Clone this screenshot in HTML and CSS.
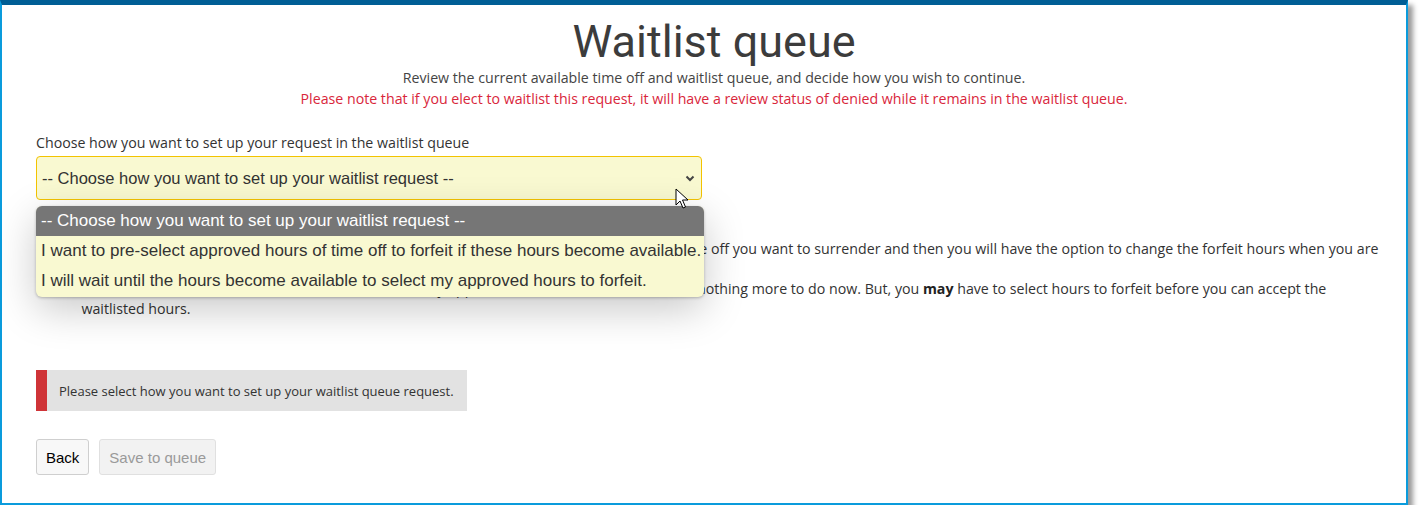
FILE: index.html
```html
<!DOCTYPE html>
<html lang="en">
<head>
    <meta charset="UTF-8">
    <title>Waitlist queue</title>
    <link rel="stylesheet" href="styles.css">
</head>
<body>

<div class="frame">
    <div class="page-head">
        <h1>Waitlist queue</h1>
        <p class="intro">Review the current available time off and waitlist queue, and decide how you wish to continue.</p>
        <p class="note">Please note that if you elect to waitlist this request, it will have a review status of denied while it remains in the waitlist queue.</p>
    </div>

    <div class="field">
        <label class="field-label">Choose how you want to set up your request in the waitlist queue</label>
        <div class="select-wrap">
            <div class="select">
                <span>-- Choose how you want to set up your waitlist request --</span>
                <svg class="chevron" width="10" height="7" viewBox="0 0 10 7"><path d="M1.5 1.5 5 5 8.5 1.5" fill="none" stroke="#444" stroke-width="2"/></svg>
            </div>
            <ul class="options">
                <li class="active">-- Choose how you want to set up your waitlist request --</li>
                <li>I want to pre-select approved hours of time off to forfeit if these hours become available.</li>
                <li>I will wait until the hours become available to select my approved hours to forfeit.</li>
            </ul>
            <!-- mouse pointer -->
            <svg class="pointer" width="14" height="22" viewBox="0 0 14 22"><path d="M1 1v16l4-4 3 7 2.5-1-3-7h5.5z" fill="#fff" stroke="#000" stroke-width="1" stroke-linejoin="round"/></svg>
        </div>
    </div>

    <div class="choices">
        <label class="choice">
            <input type="radio" name="mode">
            <span>I want to pre-select approved hours to forfeit if these hours become available. Choose the time off you want to surrender and then you will have the option to change the forfeit hours when you are ready.</span>
        </label>
        <label class="choice">
            <input type="radio" name="mode">
            <span>I will wait until the hours become available to select my approved hours to forfeit. You'll have nothing more to do now. But, you <b>may</b> have to select hours to forfeit before you can accept the waitlisted hours.</span>
        </label>
    </div>

    <div class="alert">Please select how you want to set up your waitlist queue request.</div>

    <div class="actions">
        <button class="btn">Back</button>
        <button class="btn" disabled>Save to queue</button>
    </div>
</div>

</body>
</html>
```

FILE: styles.css
```css
body {
    margin: 0;
    background: #fff;
    font-family: "Open Sans", sans-serif;
    color: #444;
}
.frame {
    box-sizing: border-box;
    width: 1408px;
    height: 505px;
    border: 2px solid #0a9bdc;
    border-top: 5px solid #005e95;
    box-shadow: 5px 5px 5px rgba(0, 0, 0, 0.4);
    padding: 0 20px 0 34px;
}
.page-head {
    text-align: center;
    padding-top: 12px;
    margin-right: -6px;
}
h1 {
    font-family: Roboto, sans-serif;
    font-weight: 400;
    font-size: 45px;
    line-height: 50px;
    color: #3c3c3c;
    margin: 0;
}
.intro, .note {
    margin: 0;
    font-size: 14.2px;
    line-height: 21px;
}
.note {
    color: #d9263b;
}
.field {
    margin-top: 24px;
}
.field-label {
    display: block;
    font-size: 14.2px;
    line-height: 20px;
    color: #333;
    margin-bottom: 3px;
}
.select-wrap {
    position: relative;
    width: 666px;
}
.select {
    box-sizing: border-box;
    height: 44px;
    display: flex;
    align-items: center;
    justify-content: space-between;
    padding: 0 6px 0 5px;
    background: #f9f9d1;
    border: 1px solid #f3c300;
    border-radius: 4px;
    font-family: "Liberation Sans", Arial, sans-serif;
    font-size: 16.5px;
    color: #333;
}
.chevron {
    margin-top: 1px;
}
.options {
    position: absolute;
    top: 50px;
    left: 0;
    width: 668px;
    margin: 0;
    padding: 0 0 1px;
    list-style: none;
    background: #f9f9d1;
    border-radius: 6px;
    overflow: hidden;
    box-shadow: 0 12px 40px rgba(0, 0, 0, 0.22), 0 1px 3px rgba(0, 0, 0, 0.25);
    font-family: "Liberation Sans", Arial, sans-serif;
    font-size: 17px;
    line-height: 30px;
    color: #333;
    z-index: 2;
}
.options li {
    padding: 0 5px;
    white-space: nowrap;
}
.options li.active {
    background: #767676;
    color: #fff;
}
.pointer {
    position: absolute;
    left: 639px;
    top: 32px;
    z-index: 3;
}
.choices {
    margin-top: 39px;
    padding-left: 24px;
}
.choice {
    display: flex;
    align-items: flex-start;
    gap: 8px;
    font-size: 14.2px;
    line-height: 20px;
    color: #333;
}
.choice input {
    margin: 4px 0 0;
    width: 14px;
    height: 14px;
}
.choice b {
    color: #222;
}
.alert {
    margin-top: 51px;
    width: 431px;
    box-sizing: border-box;
    height: 41px;
    display: flex;
    align-items: center;
    padding-left: 12px;
    background: #e2e2e2;
    border-left: 11px solid #cf3438;
    font-size: 13px;
    color: #333;
}
.actions {
    margin-top: 28px;
    display: flex;
    gap: 10px;
}
.btn {
    height: 36px;
    padding: 0 9px;
    background: #f8f8f8;
    border: 1px solid #cfcfcf;
    border-radius: 3px;
    font-family: "Liberation Sans", Arial, sans-serif;
    font-size: 15px;
    color: #000;
}
.btn:disabled {
    background: #f2f2f2;
    border-color: #e0e0e0;
    color: #9a9a9a;
}
```
